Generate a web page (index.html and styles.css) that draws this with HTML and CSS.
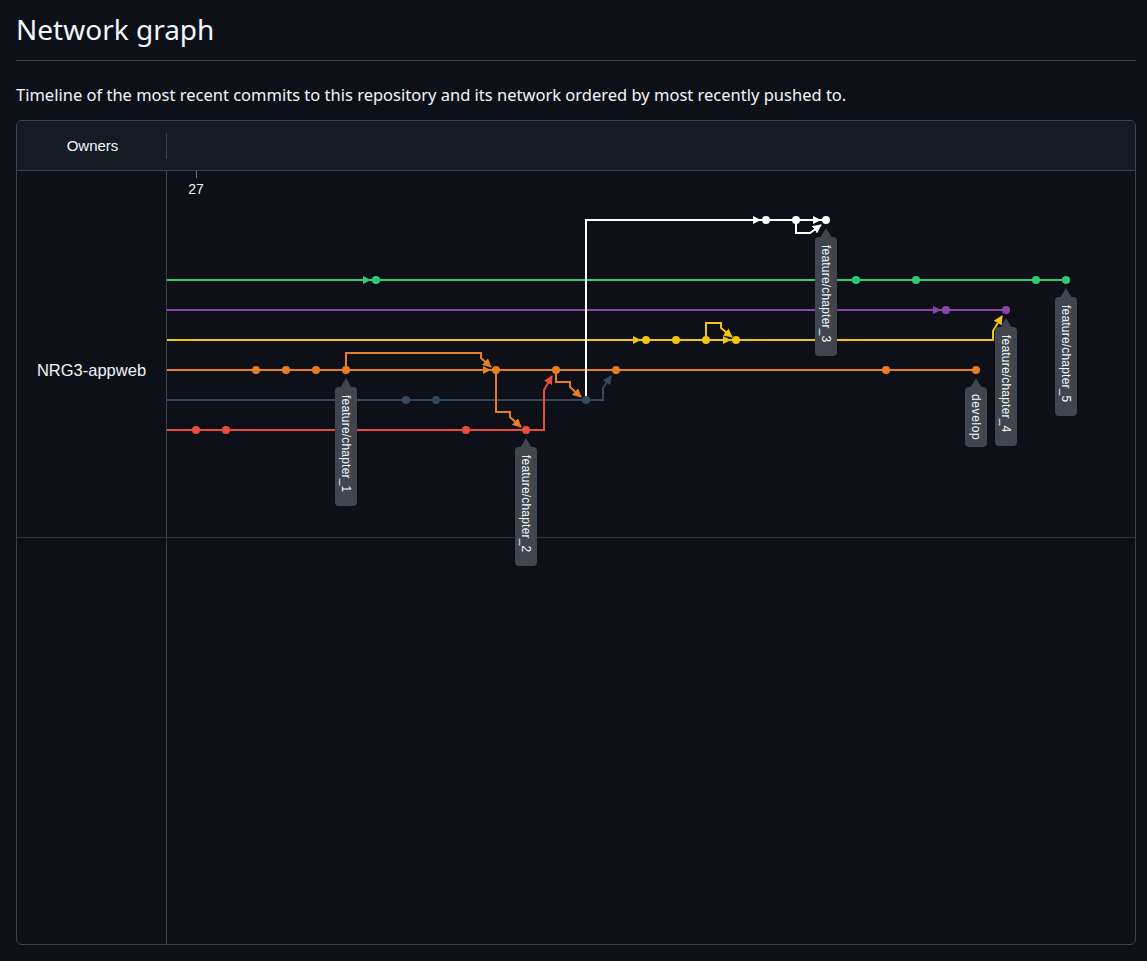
FILE: index.html
```html
<!DOCTYPE html>
<html lang="en">
<head>
<meta charset="utf-8">
<title>Network graph</title>
<link rel="stylesheet" href="styles.css">
</head>
<body>
<div class="page">
  <div class="subhead">
    <h2 class="subhead-heading">Network graph</h2>
  </div>
  <p class="lead">Timeline of the most recent commits to this repository and its network ordered by most recently pushed to.</p>

  <div class="network">
    <div class="net-head">
      <div class="owners-head">Owners</div>
      <div class="dates-head"></div>
    </div>
    <div class="net-row net-row-main">
      <div class="owner-cell"><span class="owner-name">NRG3-appweb</span></div>
      <div class="graph-cell">
        <svg class="graph" viewBox="167 171 968 366" width="968" height="366" xmlns="http://www.w3.org/2000/svg">
          <defs>
            <marker id="m-orange" viewBox="0 0 10 10" refX="9" refY="5" markerUnits="userSpaceOnUse" markerWidth="9" markerHeight="9" orient="auto"><path d="M0,0 L10,5 L0,10 z" fill="#e67e22"/></marker>
            <marker id="m-yellow" viewBox="0 0 10 10" refX="9" refY="5" markerUnits="userSpaceOnUse" markerWidth="9" markerHeight="9" orient="auto"><path d="M0,0 L10,5 L0,10 z" fill="#f1c40f"/></marker>
            <marker id="m-white" viewBox="0 0 10 10" refX="9" refY="5" markerUnits="userSpaceOnUse" markerWidth="9" markerHeight="9" orient="auto"><path d="M0,0 L10,5 L0,10 z" fill="#ffffff"/></marker>
            <marker id="m-red" viewBox="0 0 10 10" refX="9" refY="5" markerUnits="userSpaceOnUse" markerWidth="9" markerHeight="9" orient="auto"><path d="M0,0 L10,5 L0,10 z" fill="#e74c3c"/></marker>
            <marker id="m-slate" viewBox="0 0 10 10" refX="9" refY="5" markerUnits="userSpaceOnUse" markerWidth="9" markerHeight="9" orient="auto"><path d="M0,0 L10,5 L0,10 z" fill="#34495e"/></marker>
          </defs>

          <!-- date tick -->
          <line x1="196.5" y1="171" x2="196.5" y2="178" class="tick"/>
          <text x="196" y="194" class="date">27</text>

          <!-- main lanes -->
          <g fill="none" stroke-width="2">
            <path d="M167,280 H1066" stroke="#2ecc71"/>
            <path d="M167,310 H1006" stroke="#8e44ad"/>
            <path d="M167,340 H736" stroke="#f1c40f"/>
            <path d="M167,370 H976" stroke="#e67e22"/>
            <path d="M167,400 H586" stroke="#34495e"/>
            <path d="M167,430 H526" stroke="#e74c3c"/>

            <!-- branch / merge connections -->
            <path d="M346,370 V353 H481 V358 L491,367" stroke="#e67e22" marker-end="url(#m-orange)"/>
            <path d="M496,370 V412 H510 V417 L521,427" stroke="#e67e22" marker-end="url(#m-orange)"/>
            <path d="M556,370 V382 H570 V387 L581,397" stroke="#e67e22" marker-end="url(#m-orange)"/>
            <path d="M526,430 H544 V390 L552,376" stroke="#e74c3c" marker-end="url(#m-red)"/>
            <path d="M586,400 H603 V388 L611,376" stroke="#34495e" marker-end="url(#m-slate)"/>
            <path d="M706,340 V323 H721 V328 L732,337" stroke="#f1c40f" marker-end="url(#m-yellow)"/>
            <path d="M736,340 H993 V331 L1002,316" stroke="#f1c40f" marker-end="url(#m-yellow)"/>
            <path d="M586,400 V220 H826" stroke="#ffffff"/>
            <path d="M796,220 V233 H810 L821,225" stroke="#ffffff" marker-end="url(#m-white)"/>
          </g>

          <!-- inline arrowheads -->
          <g>
            <polygon points="363,276 363,284 371,280" fill="#2ecc71"/>
            <polygon points="933,306 933,314 941,310" fill="#8e44ad"/>
            <polygon points="633,336 633,344 641,340" fill="#f1c40f"/>
            <polygon points="723,336 723,344 731,340" fill="#f1c40f"/>
            <polygon points="483,366 483,374 491,370" fill="#e67e22"/>
            <polygon points="753,216 753,224 761,220" fill="#ffffff"/>
            <polygon points="813,216 813,224 821,220" fill="#ffffff"/>
          </g>

          <!-- commits -->
          <g fill="#2ecc71">
            <circle cx="376" cy="280" r="4"/><circle cx="856" cy="280" r="4"/><circle cx="916" cy="280" r="4"/><circle cx="1036" cy="280" r="4"/><circle cx="1066" cy="280" r="4"/>
          </g>
          <g fill="#8e44ad">
            <circle cx="946" cy="310" r="4"/><circle cx="1006" cy="310" r="4"/>
          </g>
          <g fill="#f1c40f">
            <circle cx="646" cy="340" r="4"/><circle cx="676" cy="340" r="4"/><circle cx="706" cy="340" r="4"/><circle cx="736" cy="340" r="4"/>
          </g>
          <g fill="#e67e22">
            <circle cx="256" cy="370" r="4"/><circle cx="286" cy="370" r="4"/><circle cx="316" cy="370" r="4"/><circle cx="346" cy="370" r="4"/><circle cx="496" cy="370" r="4"/><circle cx="556" cy="370" r="4"/><circle cx="616" cy="370" r="4"/><circle cx="886" cy="370" r="4"/><circle cx="976" cy="370" r="4"/>
          </g>
          <g fill="#34495e">
            <circle cx="406" cy="400" r="4"/><circle cx="436" cy="400" r="4"/><circle cx="586" cy="400" r="4"/>
          </g>
          <g fill="#e74c3c">
            <circle cx="196" cy="430" r="4"/><circle cx="226" cy="430" r="4"/><circle cx="466" cy="430" r="4"/><circle cx="526" cy="430" r="4"/>
          </g>
          <g fill="#ffffff">
            <circle cx="766" cy="220" r="4"/><circle cx="796" cy="220" r="4"/><circle cx="826" cy="220" r="4"/>
          </g>

          <!-- branch labels -->
          <g class="label" transform="translate(346,370)">
            <path d="M0,8 L6,18 L-6,18 z"/>
            <rect x="-11" y="17" width="22" height="119" rx="4"/>
            <text transform="translate(0,25) rotate(90)" x="0" y="4">feature/chapter_1</text>
          </g>
          <g class="label" transform="translate(526,430)">
            <path d="M0,8 L6,18 L-6,18 z"/>
            <rect x="-11" y="17" width="22" height="119" rx="4"/>
            <text transform="translate(0,25) rotate(90)" x="0" y="4">feature/chapter_2</text>
          </g>
          <g class="label" transform="translate(826,220)">
            <path d="M0,8 L6,18 L-6,18 z"/>
            <rect x="-11" y="17" width="22" height="119" rx="4"/>
            <text transform="translate(0,25) rotate(90)" x="0" y="4">feature/chapter_3</text>
          </g>
          <g class="label" transform="translate(976,370)">
            <path d="M0,8 L6,18 L-6,18 z"/>
            <rect x="-11" y="17" width="22" height="60" rx="4"/>
            <text transform="translate(0,24) rotate(90)" x="0" y="4" class="spaced">develop</text>
          </g>
          <g class="label" transform="translate(1006,310)">
            <path d="M0,8 L6,18 L-6,18 z"/>
            <rect x="-11" y="17" width="22" height="119" rx="4"/>
            <text transform="translate(0,25) rotate(90)" x="0" y="4">feature/chapter_4</text>
          </g>
          <g class="label" transform="translate(1066,280)">
            <path d="M0,8 L6,18 L-6,18 z"/>
            <rect x="-11" y="17" width="22" height="119" rx="4"/>
            <text transform="translate(0,25) rotate(90)" x="0" y="4">feature/chapter_5</text>
          </g>
        </svg>
      </div>
    </div>
    <div class="net-row net-row-empty">
      <div class="owner-cell"></div>
      <div class="graph-cell"></div>
    </div>
  </div>
</div>
</body>
</html>
```

FILE: styles.css
```css
html, body {
  margin: 0;
  padding: 0;
  background: #0d1117;
  color: #f0f6fc;
}

body {
  font-family: "Noto Sans", "Open Sans", "Liberation Sans", sans-serif;
}

.page {
  width: 1120px;
  padding: 11px 16px 0 16px;
}

.subhead {
  padding-bottom: 13px;
  border-bottom: 1px solid #3d444d;
}

.subhead-heading {
  margin: 0;
  font-size: 28px;
  line-height: 36px;
  font-weight: 400;
}

.lead {
  margin: 22px 0 13px 0;
  font-size: 16.5px;
  line-height: 24px;
}

.network {
  border: 1px solid #3d444d;
  border-radius: 6px;
  overflow: hidden;
  font-family: "Liberation Sans", Arial, sans-serif;
}

.net-head {
  display: grid;
  grid-template-columns: 150px 1fr;
  align-items: center;
  height: 49px;
  background: #151b23;
  border-bottom: 1px solid #3d444d;
}

.owners-head {
  height: 26px;
  line-height: 26px;
  border-right: 1px solid #3d444d;
  text-align: center;
  font-size: 15px;
  padding-left: 2px;
  color: #f0f6fc;
}

.net-row {
  display: grid;
  grid-template-columns: 150px 1fr;
}

.net-row-main {
  height: 366px;
  border-bottom: 1px solid #30363d;
}

.net-row-empty {
  height: 406px;
}

.owner-cell {
  border-right: 1px solid #3d444d;
  display: flex;
  justify-content: center;
  align-items: flex-start;
}

.net-row-main .owner-cell {
  padding-top: 190px;
}

.owner-name {
  font-size: 16.5px;
  line-height: 18px;
  color: #f0f6fc;
}

.graph-cell {
  position: relative;
}

.graph {
  display: block;
  overflow: visible;
}

.tick {
  stroke: #6e7681;
  stroke-width: 1;
}

.date {
  font-family: "Liberation Sans", Arial, sans-serif;
  font-size: 14px;
  fill: #f0f6fc;
  text-anchor: middle;
}

.label path,
.label rect {
  fill: #41464e;
}

.label text {
  font-family: "Liberation Sans", Arial, sans-serif;
  font-size: 12px;
  letter-spacing: 0.2px;
  fill: #f0f6fc;
}

.label text.spaced {
  letter-spacing: 0.6px;
}
```
